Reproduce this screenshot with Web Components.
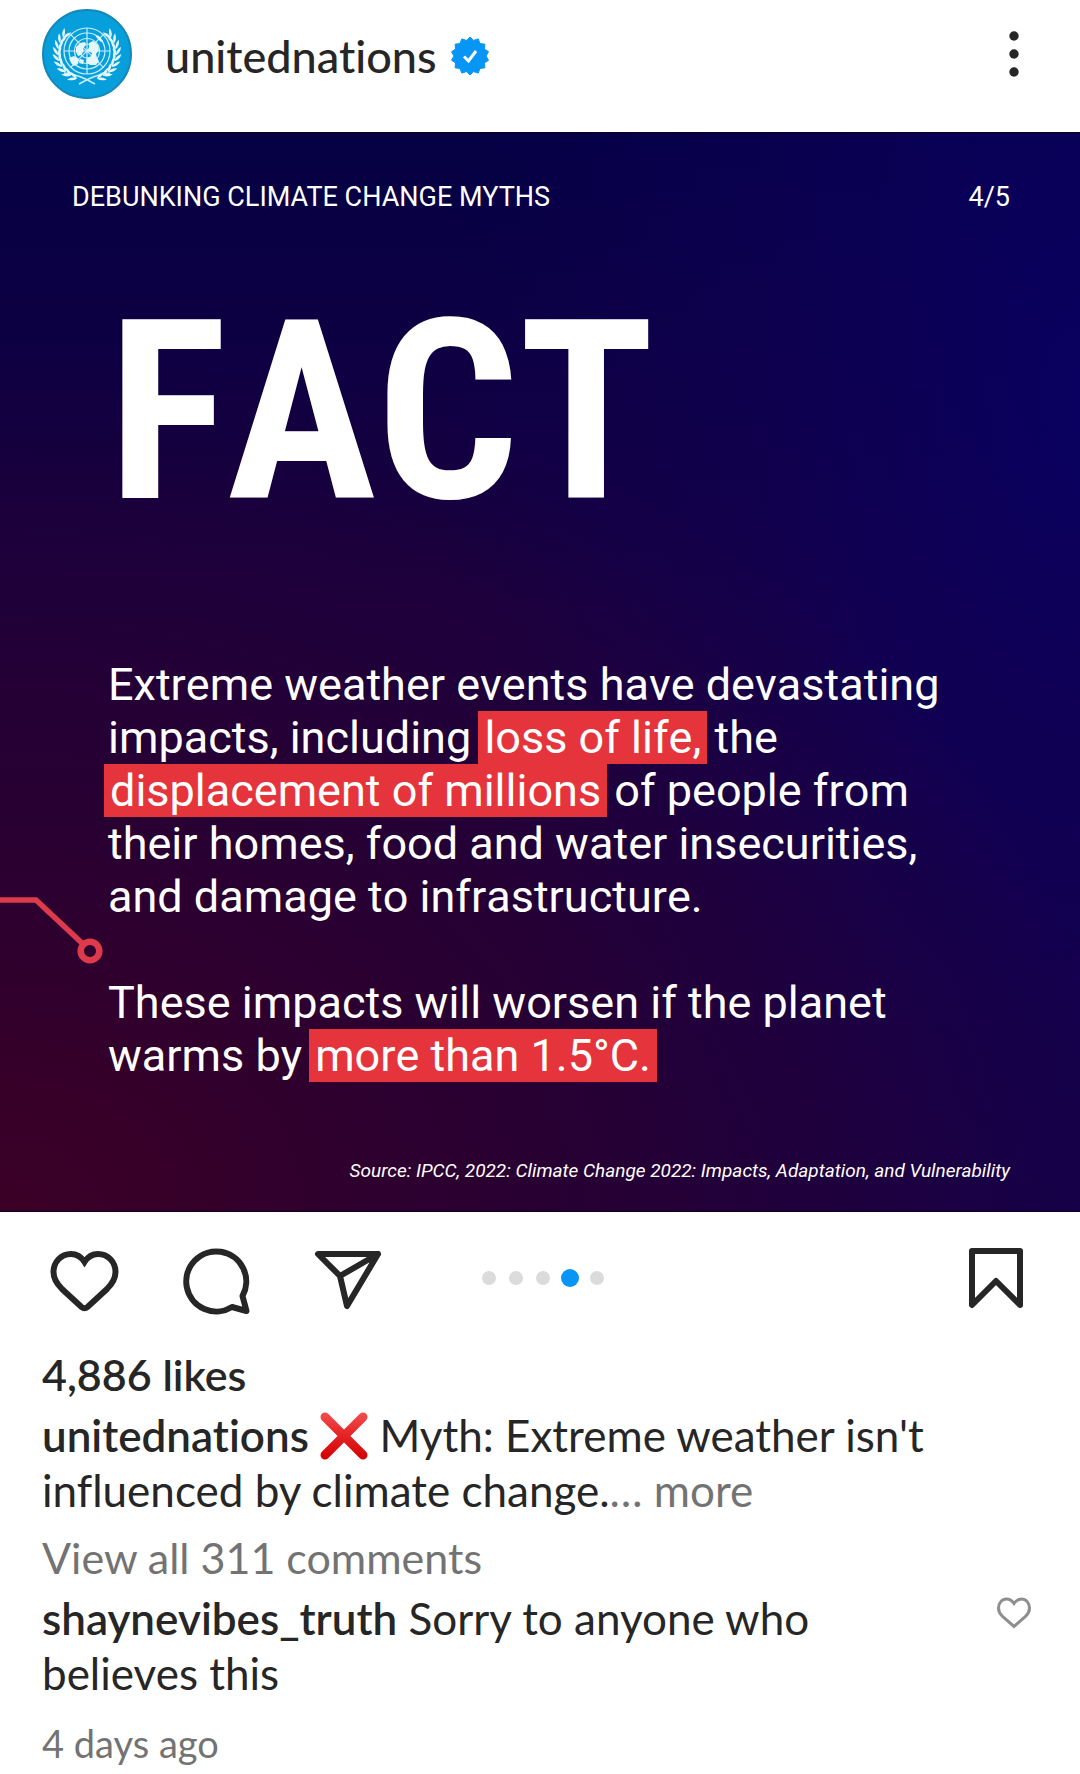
<!DOCTYPE html>
<html lang="en">
<head>
<meta charset="utf-8">
<meta name="viewport" content="width=device-width, initial-scale=1">
<title>unitednations</title>
<style>
  body { margin: 0; background: #fff; color: #262626; font: 44px/55px Lato, "Noto Sans", sans-serif; font-variant-ligatures: none; }
</style>
</head>
<body>
<social-post>
  <post-header slot="header" name="unitednations"></post-header>
  <fact-card slot="media" topic="DEBUNKING CLIMATE CHANGE MYTHS" page="4/5" heading="FACT">
    <p>Extreme weather events have devastating impacts, including <mark-text>loss of life,</mark-text> the <mark-text>displacement of millions</mark-text> of people from their homes, food and water insecurities, and damage to infrastructure.</p>
    <p>These impacts will worsen if the planet warms by <mark-text>more than 1.5°C.</mark-text></p>
    <span slot="source">Source: IPCC, 2022: Climate Change 2022: Impacts, Adaptation, and Vulnerability</span>
  </fact-card>
  <post-actions slot="actions" count="5" current="4"></post-actions>
  <post-caption slot="text" likes="4,886 likes" name="unitednations">Myth: Extreme weather isn't influenced by climate change.</post-caption>
  <post-comments slot="text" total="View all 311 comments" name="shaynevibes_truth" age="4 days ago">Sorry to anyone who believes this</post-comments>
</social-post>

<script>
const BUTTON = `
  button { appearance: none; border: 0; margin: 0; padding: 0; background: none; color: inherit; font: inherit; cursor: pointer; }
  a { color: inherit; text-decoration: none; }
  svg { display: block; }`;

class Base extends HTMLElement {
  connectedCallback() {
    if (this.shadowRoot) return;
    this.attachShadow({ mode: 'open' }).innerHTML = `<style>${BUTTON}</style>` + this.render();
  }
  at(name) { return this.getAttribute(name); }
}

customElements.define('social-post', class extends Base {
  render() {
    return `<style>:host { display: block; padding-bottom: 9px; } article { display: flex; flex-direction: column; }</style>
    <article><slot name="header"></slot><slot name="media"></slot><slot name="actions"></slot><slot name="text"></slot></article>`;
  }
});

/* Round emblem: azimuthal globe between two olive branches */
customElements.define('un-avatar', class extends Base {
  render() {
    let leaves = '';
    for (const side of [-1, 1]) {
      for (let i = 0; i < 9; i++) {
        const deg = -34 + i * 13;
        const a = deg * Math.PI / 180;
        const x = 45 + side * 29 * Math.cos(a), y = 44 + 27 * Math.sin(a);
        const base = side > 0 ? deg - 90 : 270 - deg;
        for (const t of [-22, 26]) {
          const turn = base + side * t;
          leaves += `<path d="M0 0Q4.500 -2.700 10 0Q4.500 2.700 0 0Z" transform="translate(${x.toFixed(1)} ${y.toFixed(1)}) rotate(${turn.toFixed(0)})"/>`;
        }
      }
    }
    return `<style>:host { display: block; width: 90px; height: 90px; }</style>
    <svg width="90" height="90" viewBox="0 0 90 90" role="img" aria-label="United Nations emblem">
      <circle cx="45" cy="45" r="44" fill="#069fdc" stroke="#1588ba" stroke-width="2"/>
      <g fill="none" stroke="#c8eefa" stroke-width="1.200">
        <circle cx="45" cy="42" r="23"/><circle cx="45" cy="42" r="18"/><circle cx="45" cy="42" r="12.500"/><circle cx="45" cy="42" r="7"/>
        <path d="M45 19V65M22 42H68M28.700 25.700L61.300 58.300M61.300 25.700L28.700 58.300"/>
        <path d="M22 64Q36 65 53 75M68 64Q54 65 37 75" stroke-width="1.500"/>
      </g>
      <g fill="#e4f8fc">${leaves}
        <path d="M34 38l4-4 5-1 1 3-3 3 1 3-3 4-3 1-2-4zM47 34l4-2 5 4 1 5-3 4 1 4 2 3-3 4-6 0-4-3 1-4 4-1 1-4-4-2 1-4zM27 49l5-2 5 3-1 5-4 2-3-3zM53 26l4 1 4 5-2 1-4-4zM38 50l4 1-1 4-4-1z"/>
      </g>
    </svg>`;
  }
});

customElements.define('verified-badge', class extends Base {
  render() {
    const pts = [];
    for (let i = 0; i < 28; i++) {
      const r = i % 2 ? 16 : 19, a = i * Math.PI / 14 - Math.PI / 2;
      pts.push(`${(20 + r * Math.cos(a)).toFixed(1)},${(20 + r * Math.sin(a)).toFixed(1)}`);
    }
    return `<style>:host { display: block; }</style>
    <svg width="40" height="40" viewBox="0 0 40 40" role="img" aria-label="Verified">
      <polygon points="${pts.join(' ')}" fill="#0795f6" stroke="#0795f6" stroke-linejoin="round"/>
      <path d="M14 20.500l4.500 4.500 7.500-10" fill="none" stroke="#fff" stroke-width="3"/>
    </svg>`;
  }
});

customElements.define('post-header', class extends Base {
  render() {
    return `<style>
      :host { display: block; }
      header { display: flex; align-items: center; padding: 9px 42px 33px; }
      .name { display: flex; align-items: center; gap: 13px; margin-left: 33px; padding-top: 4px; font-weight: 500; font-size: 45px; }
      .more { margin-left: auto; width: 48px; height: 72px; }
    </style>
    <header>
      <un-avatar></un-avatar>
      <a class="name" href="#profile"><span>${this.at('name')}</span><verified-badge></verified-badge></a>
      <button class="more" aria-label="More options">
        <svg width="48" height="72" viewBox="0 0 48 72" fill="#262626"><circle cx="24" cy="18" r="4.700"/><circle cx="24" cy="36" r="4.700"/><circle cx="24" cy="54" r="4.700"/></svg>
      </button>
    </header>`;
  }
});

customElements.define('mark-text', class extends Base {
  render() {
    return `<style>:host { display: inline; } mark { background: #e5343b; color: inherit; padding: 0 6px; margin: 0 -4px; }</style><mark><slot></slot></mark>`;
  }
});

customElements.define('fact-card', class extends Base {
  render() {
    return `<style>
      :host { display: block; color: #fff; font-family: Roboto, sans-serif; font-kerning: none; }
      section {
        position: relative; display: flex; flex-direction: column; padding: 49px 70px 29px 72px;
        background:
          linear-gradient(#0a0020, transparent 2px),
          linear-gradient(0deg, #0a0020, transparent 2px),
          radial-gradient(ellipse 105% 80% at 0% 100%, rgba(62,0,36,.95), rgba(50,0,42,.65) 45%, transparent),
          radial-gradient(ellipse 60% 120% at 100% 25%, rgba(9,0,98,.9), rgba(14,0,90,.45) 50%, transparent),
          linear-gradient(#050044, #180040 45%, #180040);
      }
      .top { display: flex; justify-content: space-between; font-size: 27px; line-height: 32px; font-kerning: normal; }
      h1 { margin: 75px 0 0 36px; font: 700 250px/250px "Roboto Condensed", Roboto, sans-serif; font-kerning: none; }
      .body { margin: 120px 0 0 36px; max-width: 862px; font-size: 45px; line-height: 53px; }
      ::slotted(p) { margin: 0 0 53px; }
      .source { margin-top: 24px; text-align: right; font: italic 19px/24px Roboto, sans-serif; }
      .link { position: absolute; left: 0; top: 758px; }
    </style>
    <section>
      <div class="top"><span>${this.at('topic')}</span><span>${this.at('page')}</span></div>
      <h1>${this.at('heading')}</h1>
      <div class="body"><slot></slot></div>
      <div class="source"><slot name="source"></slot></div>
      <svg class="link" width="110" height="80" viewBox="0 0 110 80" fill="none" stroke="#dd3a4b" aria-hidden="true">
        <path d="M0 10H36L83 54" stroke-width="5.500"/><circle cx="90" cy="61" r="9.300" stroke-width="6.500"/>
      </svg>
    </section>`;
  }
});

customElements.define('post-actions', class extends Base {
  render() {
    let dots = '';
    for (let i = 1; i <= +this.at('count'); i++) dots += `<i class="${i == this.at('current') ? 'on' : ''}"></i>`;
    return `<style>
      :host { display: block; }
      nav { display: grid; grid-template-columns: 1fr auto 1fr; align-items: center; padding: 33px 42px 30px; }
      .left { display: flex; gap: 48px; }
      .left button, .save { width: 84px; height: 72px; }
      .save { justify-self: end; }
      .dots { display: flex; align-items: center; gap: 13px; margin-bottom: 6px; padding-left: 6px; }
      i { width: 14px; height: 14px; border-radius: 50%; background: #dbdbdb; }
      i.on { width: 18px; height: 18px; margin: 0 -2px; background: #0795f6; }
      svg { fill: none; stroke: #262626; stroke-width: 6; stroke-linejoin: round; stroke-linecap: round; }
    </style>
    <nav>
      <div class="left">
        <button aria-label="Like"><svg width="84" height="72" viewBox="0 0 84 72"><path stroke-linejoin="miter" d="M42.500 17C39 11.500 34.500 9 29 9C19 9 11.500 17 11.500 27C11.500 34 15 39 20 44L39.500 62Q42.500 64.500 45.500 62L65 44C70 39 73.500 34 73.500 27C73.500 17 66 9 56 9C50.500 9 46 11.500 42.500 17Z"/></svg></button>
        <button aria-label="Comment"><svg width="84" height="72" viewBox="0 0 84 72"><path d="M68.500 51A30 30 0 1 0 58 62L72.500 66Z"/></svg></button>
        <button aria-label="Share"><svg width="84" height="72" viewBox="0 0 84 72"><path d="M12 9H72L41 61L34 31ZM34 31L72 9"/></svg></button>
      </div>
      <div class="dots">${dots}</div>
      <button class="save" aria-label="Save"><svg width="84" height="72" viewBox="0 0 84 72"><path d="M18 6H66V60L42 36L18 60Z"/></svg></button>
    </nav>`;
  }
});

customElements.define('post-caption', class extends Base {
  render() {
    return `<style>
      :host { display: block; padding: 0 42px; }
      p { margin: 0; }
      .text { margin-top: 6px; }
      b, .likes { font-weight: 600; }
      .likes { font-size: 43px; }
      svg { display: inline-block; vertical-align: -8px; margin: 0; }
      .more { color: #737373; }
    </style>
    <p class="likes">${this.at('likes')}</p>
    <p class="text"><b>${this.at('name')}</b>
      <svg width="48" height="48" viewBox="0 0 48 48" role="img" aria-label="cross mark">
        <defs><linearGradient id="g" gradientUnits="userSpaceOnUse" x1="0" y1="2" x2="0" y2="46"><stop stop-color="#f44b4b"/><stop offset=".4" stop-color="#e62a2b"/><stop offset="1" stop-color="#d40204"/></linearGradient></defs>
        <path d="M5 5L43 43M43 5L5 43" fill="none" stroke="url(#g)" stroke-width="9" stroke-linecap="round"/>
      </svg>
      <slot></slot><span class="more">… <button>more</button></span></p>`;
  }
});

customElements.define('post-comments', class extends Base {
  render() {
    return `<style>
      :host { display: block; padding: 12px 42px 0; }
      .all, time { color: #737373; }
      .all { display: block; font-size: 43px; }
      .row { display: flex; align-items: flex-start; gap: 72px; margin-top: 6px; }
      p { margin: 0; flex: 1; }
      b { font-weight: 600; }
      time { display: block; margin-top: 20px; font-size: 38px; line-height: 44px; }
    </style>
    <a class="all" href="#comments">${this.at('total')}</a>
    <div class="row">
      <p><b>${this.at('name')}</b> <slot></slot></p>
      <button aria-label="Like comment"><svg width="48" height="48" viewBox="0 0 48 48" fill="none" stroke="#8e8e8e" stroke-width="3"><path d="M24 12.500C22 9.500 19.500 8 16.500 8C12 8 8.500 12 8.500 17C8.500 20.500 10 23 12.500 25.500L24 35.500L35.500 25.500C38 23 39.500 20.500 39.500 17C39.500 12 36 8 31.500 8C28.500 8 26 9.500 24 12.500Z"/></svg></button>
    </div>
    <time>${this.at('age')}</time>`;
  }
});
</script>
</body>
</html>
